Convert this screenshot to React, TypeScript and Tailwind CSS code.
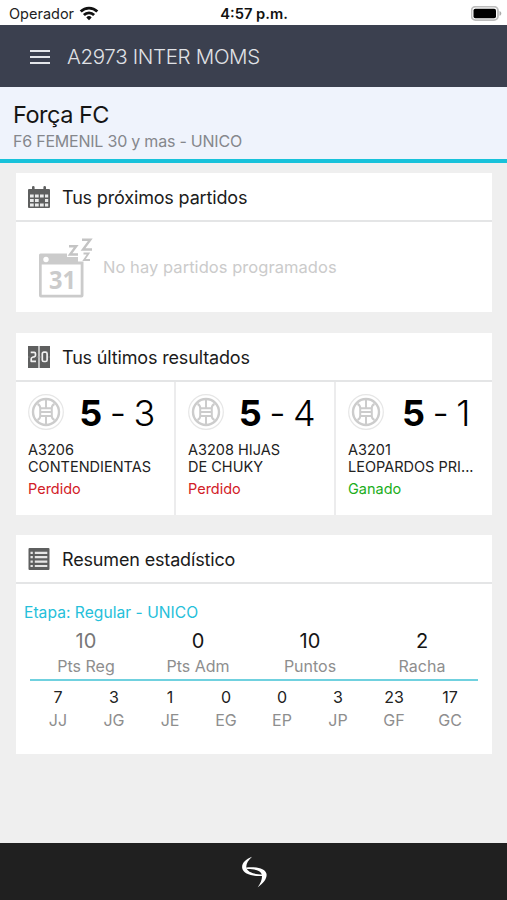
import type { ReactNode } from "react";

interface Result {
  own: number;
  rival: number;
  name: string[];
  outcome: "Perdido" | "Ganado";
}

const results: Result[] = [
  { own: 5, rival: 3, name: ["A3206", "CONTENDIENTAS"], outcome: "Perdido" },
  { own: 5, rival: 4, name: ["A3208 HIJAS", "DE CHUKY"], outcome: "Perdido" },
  { own: 5, rival: 1, name: ["A3201", "LEOPARDOS PRI..."], outcome: "Ganado" },
];

const points = [
  { value: 10, label: "Pts Reg", muted: true },
  { value: 0, label: "Pts Adm" },
  { value: 10, label: "Puntos" },
  { value: 2, label: "Racha" },
];

const games = [
  { value: 7, label: "JJ" },
  { value: 3, label: "JG" },
  { value: 1, label: "JE" },
  { value: 0, label: "EG" },
  { value: 0, label: "EP" },
  { value: 3, label: "JP" },
  { value: 23, label: "GF" },
  { value: 17, label: "GC" },
];

function WifiIcon() {
  return (
    <svg width="20" height="15" viewBox="0 0 20 15" fill="none" stroke="#111" strokeWidth="2.8">
      <path d="M1.7 5.6a11.8 11.8 0 0 1 16.6 0" />
      <path d="M4.9 9a7.2 7.2 0 0 1 10.2 0" />
      <path d="M10 14.2l-2.7-2.8a3.8 3.8 0 0 1 5.4 0z" fill="#111" stroke="none" />
    </svg>
  );
}

function BatteryIcon() {
  return (
    <svg width="32" height="16" viewBox="0 0 32 16">
      <rect x="0.5" y="0.7" width="26.5" height="13.4" rx="4" fill="#fff" stroke="#bdbdbd" strokeWidth="1.8" />
      <rect x="2.5" y="2.7" width="22.500" height="9.6" rx="1.8" fill="#000" />
      <path d="M28.500 5c2.4.8 2.4 4 0 4.800z" fill="#aaa" />
    </svg>
  );
}

function CalendarIcon() {
  return (
    <svg width="22" height="22" viewBox="0 0 22 22">
      <path
        d="M1 3h3V1.3a1.3 1.3 0 0 1 2.6 0V3h8.8V1.3a1.3 1.3 0 0 1 2.6 0V3h3a1 1 0 0 1 1 1v17a1 1 0 0 1-1 1H1a1 1 0 0 1-1-1V4a1 1 0 0 1 1-1z"
        fill="#5e5f5f"
      />
      <g fill="#e9eaea">
        <path d="M2 8.500h3.700v3H2zM7 8.500h3.700v3H7zM12 8.500h3.700v3H12zM17 8.500h3.200v3H17z" />
        <path d="M2 13h3.700v3H2zM7 13h3.700v3H7zM17 13h3.200v3H17z" />
        <path d="M2 17.500h3.700v3H2zM7 17.500h3.700v3H7zM12 17.500h3.700v3H12zM17 17.500h3.200v3H17z" />
      </g>
    </svg>
  );
}

function ScoreboardIcon() {
  return (
    <svg width="22" height="22" viewBox="0 0 22 22">
      <path d="M0 0h10.400v22H0zM11.600 0H22v22H11.600z" fill="#5e5f5f" />
      <g fill="none" stroke="#f0f0f0" strokeWidth="1.700" strokeLinejoin="round">
        <path d="M2.700 6.300h3.500q1.300 0 1.300 1.400v1.500q0 1.300-1.300 1.600l-1.700.5q-1.300.4-1.300 1.700v2.300h4.800" />
        <rect x="14.300" y="6.200" width="4.800" height="9.300" rx="1.600" />
      </g>
      <path d="M0 11h1.700M8.700 11h1.700M11.600 11h1.600M20.200 11H22" stroke="#8a8a8a" strokeWidth=".8" />
    </svg>
  );
}

function ListIcon() {
  return (
    <svg width="22" height="22" viewBox="0 0 22 22">
      <rect x="0.500" width="21" height="22" rx="1" fill="#5e5f5f" />
      <path
        d="M2.500 3.700h2.300v2.200H2.500zM6.800 3.700h12.500v2.200H6.800zM2.500 8.100h2.300v2.200H2.500zM6.800 8.100h12.500v2.200H6.800zM2.500 12.500h2.300v2.200H2.500zM6.800 12.500h12.500v2.200H6.800zM2.500 16.900h2.300v2.200H2.500zM6.800 16.900h12.500v2.200H6.800z"
        fill="#e6e6e6"
      />
    </svg>
  );
}

function SleepingCalendar() {
  return (
    <svg width="54" height="60" viewBox="0 0 54 60" fill="#cbcbcb">
      <path
        fillRule="evenodd"
        d="M1.500 15.500h26.500v3.500H39v4.500h5.500V57.500a2 2 0 0 1-2 2H2a2 2 0 0 1-2-2v-40.500a1.500 1.500 0 0 1 1.500-1.500zM2.700 26.500v30.300h39v-30.300z"
      />
      <circle cx="7" cy="21.500" r="2.700" fill="#fff" />
      <text
        x="10"
        y="51"
        fontSize="25"
        textLength="27"
        lengthAdjust="spacingAndGlyphs"
        fontFamily="'Open Sans', sans-serif"
        fontWeight="700"
      >
        31
      </text>
      <g fill="none" stroke="#c4c4c4" strokeWidth="2.400">
        <path d="M30 8.200h7.200L31 16.500h8" />
        <path d="M43 1.700h8.300L44 11.500h9" />
        <path d="M44.500 15.500h5L45 22h6" strokeWidth="1.800" />
      </g>
    </svg>
  );
}

function TeamBadge() {
  return (
    <svg width="36" height="36" viewBox="0 0 36 36" fill="none" stroke="#cccccc" strokeWidth="2">
      <circle cx="18" cy="18" r="17.300" stroke="#e6e6e6" strokeWidth="1.200" />
      <circle cx="18" cy="18" r="13" strokeWidth="2.400" />
      <path d="M12.200 14.200h11.600M12.200 18h11.600M12.200 22h11.600M18 5.500v8M18 22.500v8" />
      <path d="M9.500 10q2.700 1.200 2.700 4v8q0 2.800-2.700 4M26.500 10q-2.700 1.200-2.700 4v8q0 2.800 2.700 4" />
    </svg>
  );
}

function BrandMark() {
  return (
    <svg width="28" height="32" viewBox="0 0 28 32" fill="#fff">
      <path d="M12 .8C5 3.500 1.200 8 2.300 12.500 3.600 17.500 11 20.500 22.500 20l.800-1.600C14 18.500 7.500 16 6.500 12 5.600 8.500 8 4.500 12 .8z" />
      <path d="M17.700 31.200c6.300-4 9.800-9.500 8.700-13.700C25 12.800 17.500 10.500 6.300 11.500l.200 1.500c8.500-.2 14.200 1.800 15.300 5.500.8 3.500-.8 8-4.100 12.700z" />
    </svg>
  );
}

function CardHeader({ icon, title }: { icon: ReactNode; title: string }) {
  return (
    <div className="flex h-[49px] items-center gap-3 border-b-2 border-[#e4e5e6] pl-3">
      {icon}
      <h2 className="pt-0.5 text-[18px] leading-6 tracking-[-0.16px] whitespace-nowrap text-[#1b1b1b]">{title}</h2>
    </div>
  );
}

export default function App() {
  return (
    <div className="flex h-[900px] w-[507px] flex-col overflow-hidden bg-[#efefef] font-['Inter',sans-serif]">
      {/* Status bar */}
      <div className="grid h-[25px] shrink-0 grid-cols-3 items-center bg-white pt-0.5 pr-1 pl-[5px]">
        <div className="flex items-center gap-[5px] pl-1 text-[14.5px] text-[#222]">
          Operador
          <WifiIcon />
        </div>
        <span className="pt-px text-center text-[14.7px] font-semibold text-[#111]">4:57 p.m.</span>
        <div className="flex justify-end">
          <BatteryIcon />
        </div>
      </div>

      {/* App bar */}
      <header className="flex h-[62px] shrink-0 items-center gap-[17px] bg-[#3b404f] pt-0.5 pl-[30px]">
        <button aria-label="Menu" className="flex w-5 flex-col gap-1 pb-px">
          <span className="h-[2px] bg-[#e4e6ea]" />
          <span className="h-[2px] bg-[#e4e6ea]" />
          <span className="h-[2px] bg-[#e4e6ea]" />
        </button>
        <h1 className="text-[20.5px] font-light tracking-[-0.32px] text-[#e0e2e6]">A2973 INTER MOMS</h1>
      </header>

      {/* Team */}
      <section className="h-[76px] shrink-0 border-b-4 border-[#18c2da] bg-[#eff3fc] pt-[13px] pl-[13px]">
        <p className="text-[23.5px] leading-[30px] tracking-[-0.5px] text-[#151515]">Força FC</p>
        <p className="text-[16px] leading-[22px] tracking-[-0.22px] text-[#85878c]">F6 FEMENIL 30 y mas - UNICO</p>
      </section>

      <main className="flex flex-1 flex-col px-4 pr-[15px] pt-[10px]">
        <section className="mb-[21px] h-[139px] bg-white">
          <CardHeader icon={<CalendarIcon />} title="Tus próximos partidos" />
          <div className="flex gap-2.5 pt-4 pl-[23px]">
            <SleepingCalendar />
            <p className="pt-[17px] text-[16.5px] leading-6 tracking-[0.05px] text-[#cbcbcb]">
              No hay partidos programados
            </p>
          </div>
        </section>

        <section className="mb-5 h-[182px] bg-white">
          <CardHeader icon={<ScoreboardIcon />} title="Tus últimos resultados" />
          <div className="grid h-[133px] grid-cols-[160px_160px_1fr] divide-x-2 divide-[#ececed]">
            {results.map((result) => (
              <div key={result.name[0]} className="pt-3 pl-3">
                <div className="flex h-9 items-center">
                  <TeamBadge />
                  <div className="flex flex-1 items-center justify-center gap-[9px] pt-px pr-[5px] text-[36px] leading-9 tracking-[-1.5px] text-black">
                    <span className="font-bold">{result.own}</span>
                    <span className="font-light">-</span>
                    <span className="font-light">{result.rival}</span>
                  </div>
                </div>
                <p className="mt-[11px] text-[14.5px] leading-[17px] whitespace-nowrap text-[#222]">
                  {result.name[0]}
                  <br />
                  {result.name[1]}
                </p>
                <p
                  className={`mt-[5px] text-[14.5px] leading-[18px] ${
                    result.outcome === "Ganado" ? "text-[#1cae1c]" : "text-[#d22027]"
                  }`}
                >
                  {result.outcome}
                </p>
              </div>
            ))}
          </div>
        </section>

        <section className="h-[219px] bg-white">
          <CardHeader icon={<ListIcon />} title="Resumen estadístico" />
          <p className="pt-[19px] pl-2 text-[15.6px] leading-5 tracking-[0.03px] text-[#25c0da]">
            Etapa: Regular - UNICO
          </p>
          <div className="ml-[14px] w-[448px]">
            <div className="grid grid-cols-4 border-b-2 border-[#70d1df] pt-1.5 pb-0.5 text-center">
              {points.map((item) => (
                <div key={item.label}>
                  <p className={`text-[20px] leading-6 ${item.muted ? "text-[#777]" : "text-[#151515]"}`}>
                    {item.value}
                  </p>
                  <p className="mt-0.5 text-[16px] leading-[22px] text-[#8e8e8e]">{item.label}</p>
                </div>
              ))}
            </div>
            <div className="grid grid-cols-8 pt-1.5 text-center">
              {games.map((item) => (
                <div key={item.label}>
                  <p className="text-[16px] leading-5 text-[#222]">{item.value}</p>
                  <p className="mt-[3px] text-[16px] leading-5 text-[#8e8e8e]">{item.label}</p>
                </div>
              ))}
            </div>
          </div>
        </section>
      </main>

      <footer className="flex h-[57px] shrink-0 items-center justify-center bg-[#202020]">
        <BrandMark />
      </footer>
    </div>
  );
}
